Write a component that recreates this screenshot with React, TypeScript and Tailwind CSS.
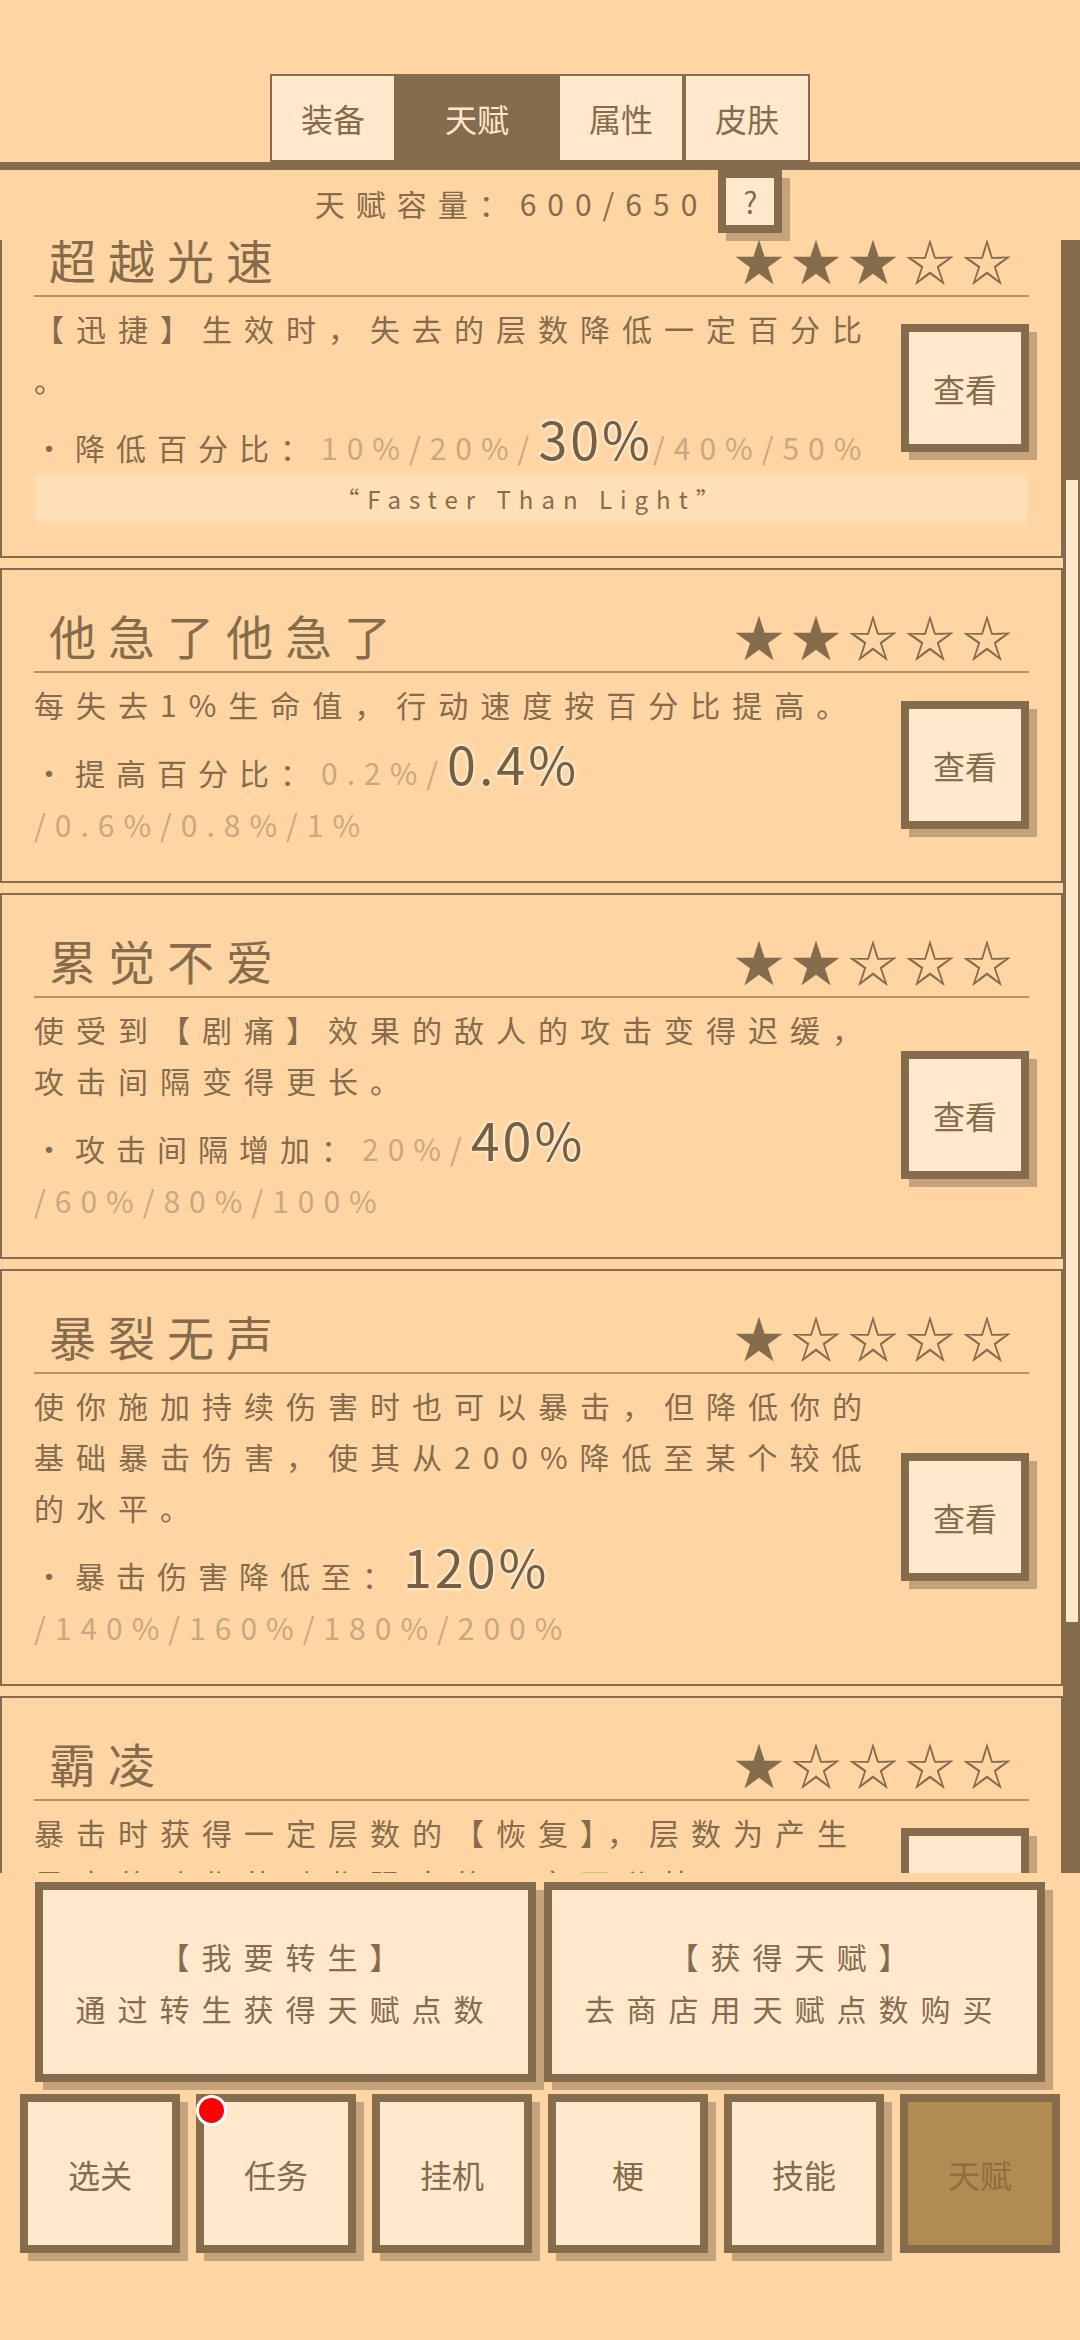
import React from "react";

type Talent = {
  title: string;
  stars: number;
  desc: string;
  label: string;
  before: string;
  cur: string;
  after: string;
  quote?: string;
};

const talents: Talent[] = [
  {
    title: "超越光速",
    stars: 3,
    desc: "【迅捷】生效时，失去的层数降低一定百分比。",
    label: "降低百分比",
    before: "10%/20%/",
    cur: "30%",
    after: "/40%/50%",
    quote: "“Faster Than Light”",
  },
  {
    title: "他急了他急了",
    stars: 2,
    desc: "每失去1%生命值，行动速度按百分比提高。",
    label: "提高百分比",
    before: "0.2%/",
    cur: "0.4%",
    after: "/0.6%/0.8%/1%",
  },
  {
    title: "累觉不爱",
    stars: 2,
    desc: "使受到【剧痛】效果的敌人的攻击变得迟缓，攻击间隔变得更长。",
    label: "攻击间隔增加",
    before: "20%/",
    cur: "40%",
    after: "/60%/80%/100%",
  },
  {
    title: "暴裂无声",
    stars: 1,
    desc: "使你施加持续伤害时也可以暴击，但降低你的基础暴击伤害，使其从200%降低至某个较低的水平。",
    label: "暴击伤害降低至",
    before: "",
    cur: "120%",
    after: "/140%/160%/180%/200%",
  },
  {
    title: "霸凌",
    stars: 1,
    desc: "暴击时获得一定层数的【恢复】，层数为产生暴击的动作的动作强度的一定百分比。",
    label: "恢复层数",
    before: "",
    cur: "10%",
    after: "/20%/30%/40%/50%",
  },
];

const tabs = ["装备", "天赋", "属性", "皮肤"];
const navs = ["选关", "任务", "挂机", "梗", "技能", "天赋"];

const TalentCard = ({ t }: { t: Talent }) => {
  return (
    <div className={`border-2 border-[#856c4c] px-[32px] pt-[35px] ${t.quote ? "pb-[24px]" : "pb-[31px]"}`}>
      <div className="flex items-center justify-between border-b-2 border-[#b89260] pb-[6px]">
        <div className="pl-[15px] text-[47px] leading-[60px] tracking-[12px]">{t.title}</div>
        <div className="pr-[10px] text-[50px] leading-[60px] tracking-[7px]">
          {"★".repeat(t.stars) + "☆".repeat(5 - t.stars)}
        </div>
      </div>
      <div className="mt-[6px] flex items-center gap-[14px]">
        <div className="min-w-0 flex-1">
          <p className="text-[30px] leading-[51px] tracking-[12px] [line-break:anywhere]">{t.desc}</p>
          <p className="mt-[7px] text-[30px] leading-[52px] tracking-[11px]">
            <span>・{t.label}：</span>
            {t.before !== "" && (
              <span className="inline-block text-[#c8a880] tracking-[9px]">{t.before}</span>
            )}
            <span className="text-[52px] tracking-[3px] text-[#76603f] [text-shadow:0_0_3px_#fff4e4,0_0_3px_#fff4e4,0_0_4px_#fff4e4]">
              {t.cur}
            </span>
            <span className="inline-block text-[#c8a880] tracking-[9px]">{t.after}</span>
          </p>
        </div>
        <button className="flex h-[128px] w-[128px] shrink-0 items-center justify-center border-[8px] border-[#856c4c] bg-[#ffe8cc] text-[32px] text-[#856c4c] shadow-[8px_8px_0_#c4a27c]">
          查看
        </button>
      </div>
      {t.quote && (
        <div className="mx-[4px] mt-[4px] mb-[12px] flex h-[43px] items-center justify-center bg-[#ffdfb5] text-[24px] tracking-[8px] shadow-[0_0_6px_3px_#ffdfb5]">
          {t.quote}
        </div>
      )}
    </div>
  );
};

export default function App() {
  return (
    <div className="flex h-[2340px] w-[1080px] flex-col overflow-hidden bg-[#ffd5a3] font-['Noto_Sans_CJK_SC',sans-serif] text-[#856c4c]">
      {/* header */}
      <div className="flex h-[240px] shrink-0 flex-col pt-[74px]">
        <div className="flex justify-center">
          {tabs.map((tab) => (
            <div
              key={tab}
              className={`flex h-[88px] items-center border-2 border-[#856c4c] text-[32px] ${
                tab === "天赋"
                  ? "bg-[#856c4c] px-[47px] text-[#ffe8cc]"
                  : "bg-[#ffe8cc] px-[29px] text-[#856c4c]"
              }`}
            >
              {tab}
            </div>
          ))}
        </div>
        <div className="h-[8px] bg-[#856c4c]" />
        <div className="flex items-start justify-center gap-[10px] pl-[17px]">
          <span className="mt-[13px] text-[30px] leading-[40px] tracking-[11px]">天赋容量：600/650</span>
          <div className="flex h-[63px] w-[64px] items-center justify-center border-[8px] border-[#856c4c] bg-[#ffe8cc] text-[30px] shadow-[8px_8px_0_#c4a27c]">
            ?
          </div>
        </div>
      </div>

      {/* list */}
      <div className="flex min-h-0 flex-1">
        <div className="min-w-0 flex-1 overflow-hidden">
          <div className="-mt-[48px] flex flex-col gap-[10px]">
            {talents.map((t) => (
              <TalentCard key={t.title} t={t} />
            ))}
          </div>
        </div>
        <div className="flex w-[17px] shrink-0 flex-col bg-[#856c4c]">
          <div className="h-[240px]" />
          <div className="ml-[3px] h-[1142px] w-[12px] bg-[#ffe8cc]" />
        </div>
      </div>

      {/* footer */}
      <div className="h-[467px] shrink-0 pt-[9px]">
        <div className="mx-[35px] grid grid-cols-2 gap-[8px]">
          {[
            ["【我要转生】", "通过转生获得天赋点数"],
            ["【获得天赋】", "去商店用天赋点数购买"],
          ].map(([a, b]) => (
            <button
              key={a}
              className="flex h-[200px] flex-col items-center justify-center border-[8px] border-[#856c4c] bg-[#ffe8cc] text-[30px] leading-[52px] tracking-[12px] text-[#856c4c] shadow-[8px_8px_0_#c4a27c]"
            >
              <span>{a}</span>
              <span>{b}</span>
            </button>
          ))}
        </div>
        <div className="mx-[20px] mt-[12px] grid grid-cols-6 gap-[16px]">
          {navs.map((n, i) => (
            <div key={i} className="relative">
              <button
                className={`flex h-[159px] w-full items-center justify-center border-[8px] border-[#856c4c] text-[32px] ${
                  i === 5
                    ? "bg-[#b08c52] text-[#8e6d3e]"
                    : "bg-[#ffe8cc] text-[#856c4c] shadow-[8px_8px_0_#c4a27c]"
                }`}
              >
                {n}
              </button>
              {i === 1 && (
                <span className="absolute left-0 top-[1px] h-[31px] w-[31px] rounded-full border-[3px] border-white bg-[#f00]" />
              )}
            </div>
          ))}
        </div>
      </div>
    </div>
  );
}
